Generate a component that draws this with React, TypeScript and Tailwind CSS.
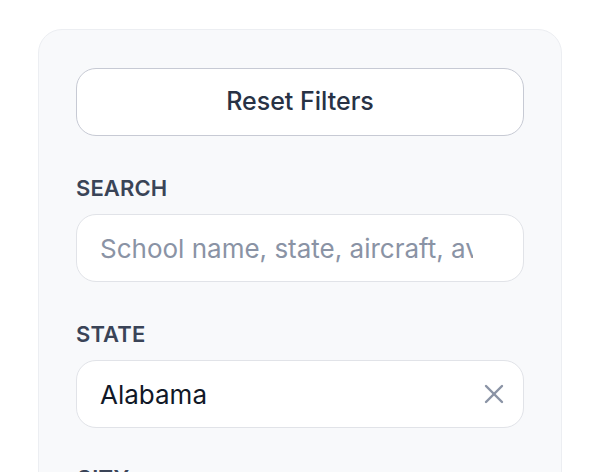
import { X } from "lucide-react";

export default function App() {
  return (
    <div className="min-h-screen bg-white pt-[29px] px-[38px] overflow-hidden" style={{ fontFamily: "Inter, 'Noto Sans', sans-serif" }}>
      <div className="rounded-[24px] border border-[#eceef2] bg-[#f8f9fb] px-[37px] pt-[38px] pb-10 h-[520px]">
        {/* Reset */}
        <button className="w-full h-[68px] rounded-[20px] border-[1.5px] border-[#c7cad4] bg-white text-[25px] font-medium text-[#283245]">
          Reset Filters
        </button>

        {/* Search */}
        <div className="mt-[36px]">
          <label className="block h-[33px] leading-[33px] text-[22px] font-semibold text-[#3a4457] tracking-[0.1px]">
            SEARCH
          </label>
          <input
            type="text"
            placeholder="School name, state, aircraft, avionics"
            className="mt-[9px] w-full h-[68px] rounded-[20px] border-[1.5px] border-[#e1e3e8] bg-white pl-[23px] pr-[50px] text-[26px] text-[#111827] placeholder:text-[#8a93a5] outline-none"
          />
        </div>

        {/* State */}
        <div className="mt-[36px]">
          <label className="block h-[33px] leading-[33px] text-[22px] font-semibold text-[#3a4457] tracking-[0.1px]">
            STATE
          </label>
          <div className="mt-[9px] w-full h-[68px] rounded-[20px] border-[1.5px] border-[#e1e3e8] bg-white pl-[23px] pr-[13px] flex items-center justify-between">
            <span className="text-[26px] text-[#111827]">Alabama</span>
            <X className="w-[32px] h-[32px] text-[#8a93a5]" strokeWidth={1.8} />
          </div>
        </div>

        {/* City */}
        <div className="mt-[34px]">
          <label className="block h-[33px] leading-[33px] text-[22px] font-semibold text-[#3a4457] tracking-[0.1px]">
            CITY
          </label>
        </div>
      </div>
    </div>
  );
}
